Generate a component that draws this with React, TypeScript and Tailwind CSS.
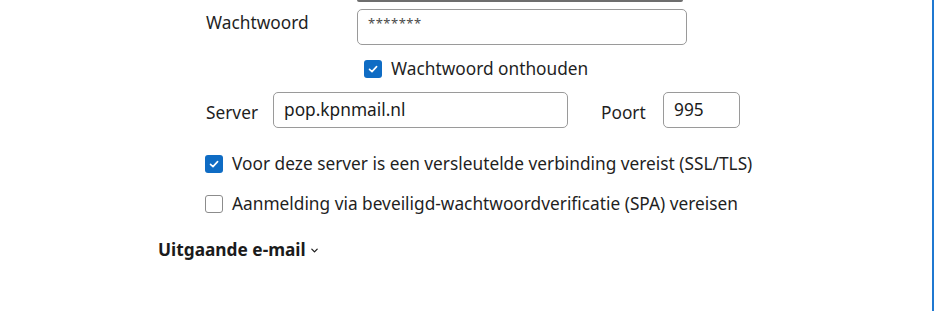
import React from 'react';

function CheckBox({ checked }: { checked: boolean }) {
  if (checked) {
    return (
      <span className="flex h-[18px] w-[18px] shrink-0 items-center justify-center rounded-[3px] bg-[#0f6cc4]">
        <svg width="12" height="12" viewBox="0 0 12 12" fill="none">
          <path d="M2.5 6.3 L5 8.6 L9.6 3.6" stroke="white" strokeWidth="1.6" strokeLinecap="round" strokeLinejoin="round" />
        </svg>
      </span>
    );
  }
  return <span className="h-[18px] w-[18px] shrink-0 rounded-[3px] border border-[#8c8c8c] bg-white" />;
}

function Field({ value, className }: { value: string; className: string }) {
  return (
    <div className={`flex h-[36px] items-center rounded-[5px] border border-[#9a9a9a] bg-white px-[10px] ${className}`}>
      <span className="text-[17.3px] leading-[22px] text-[#1b1b1b]">{value}</span>
    </div>
  );
}

export default function App() {
  return (
    <div className="flex h-[311px] w-[934px] bg-white font-['Noto_Sans',sans-serif] text-[#1f1f1f]">
      <div className="flex-1">
        {/* rest van het vorige invoerveld */}
        <div className="ml-[357px] h-[2px] w-[326px] rounded-b-[3px] bg-[#6e6e6e]" />

        {/* wachtwoord */}
        <div className="mt-[7px] flex items-start">
          <span className="ml-[206px] w-[151px] pt-[2px] text-[17.3px] leading-[24px]">Wachtwoord</span>
          <div className="flex h-[36px] w-[330px] items-start rounded-[5px] border border-[#9a9a9a] bg-white px-[10px] pt-[6px]">
            <span className="text-[13px] leading-[14px] tracking-[0.5px] text-[#4a4a4a]">*******</span>
          </div>
        </div>

        <label className="ml-[364px] mt-[14px] flex h-[20px] items-center gap-[9px]">
          <CheckBox checked />
          <span className="text-[17.3px] leading-[20px]">Wachtwoord onthouden</span>
        </label>

        {/* server + poort */}
        <div className="mt-[13px] flex items-center">
          <span className="ml-[206px] mt-[5px] w-[67px] text-[17.3px] leading-[22px]">Server</span>
          <Field value="pop.kpnmail.nl" className="w-[295px]" />
          <span className="ml-[33px] mt-[5px] w-[62px] text-[17.3px] leading-[22px]">Poort</span>
          <Field value="995" className="w-[77px]" />
        </div>

        <div className="ml-[205px] mt-[26px] flex flex-col gap-[20px]">
          <label className="flex h-[20px] items-center gap-[9px]">
            <CheckBox checked />
            <span className="text-[17.3px] leading-[20px]">Voor deze server is een versleutelde verbinding vereist (SSL/TLS)</span>
          </label>
          <label className="flex h-[20px] items-center gap-[9px]">
            <CheckBox checked={false} />
            <span className="text-[17.3px] leading-[20px]">Aanmelding via beveiligd-wachtwoordverificatie (SPA) vereisen</span>
          </label>
        </div>

        <div className="ml-[158px] mt-[25px] flex h-[22px] items-center gap-[4px]">
          <span className="text-[17.3px] font-bold leading-[22px] text-[#1b1b1b]">Uitgaande e-mail</span>
          <svg width="9" height="9" viewBox="0 0 10 10" fill="none">
            <path d="M2 3.5 L5 6.5 L8 3.5" stroke="#1b1b1b" strokeWidth="1.4" strokeLinecap="round" strokeLinejoin="round" />
          </svg>
        </div>
      </div>
      <div className="w-[2px] bg-[#1f78d1]" />
    </div>
  );
}
